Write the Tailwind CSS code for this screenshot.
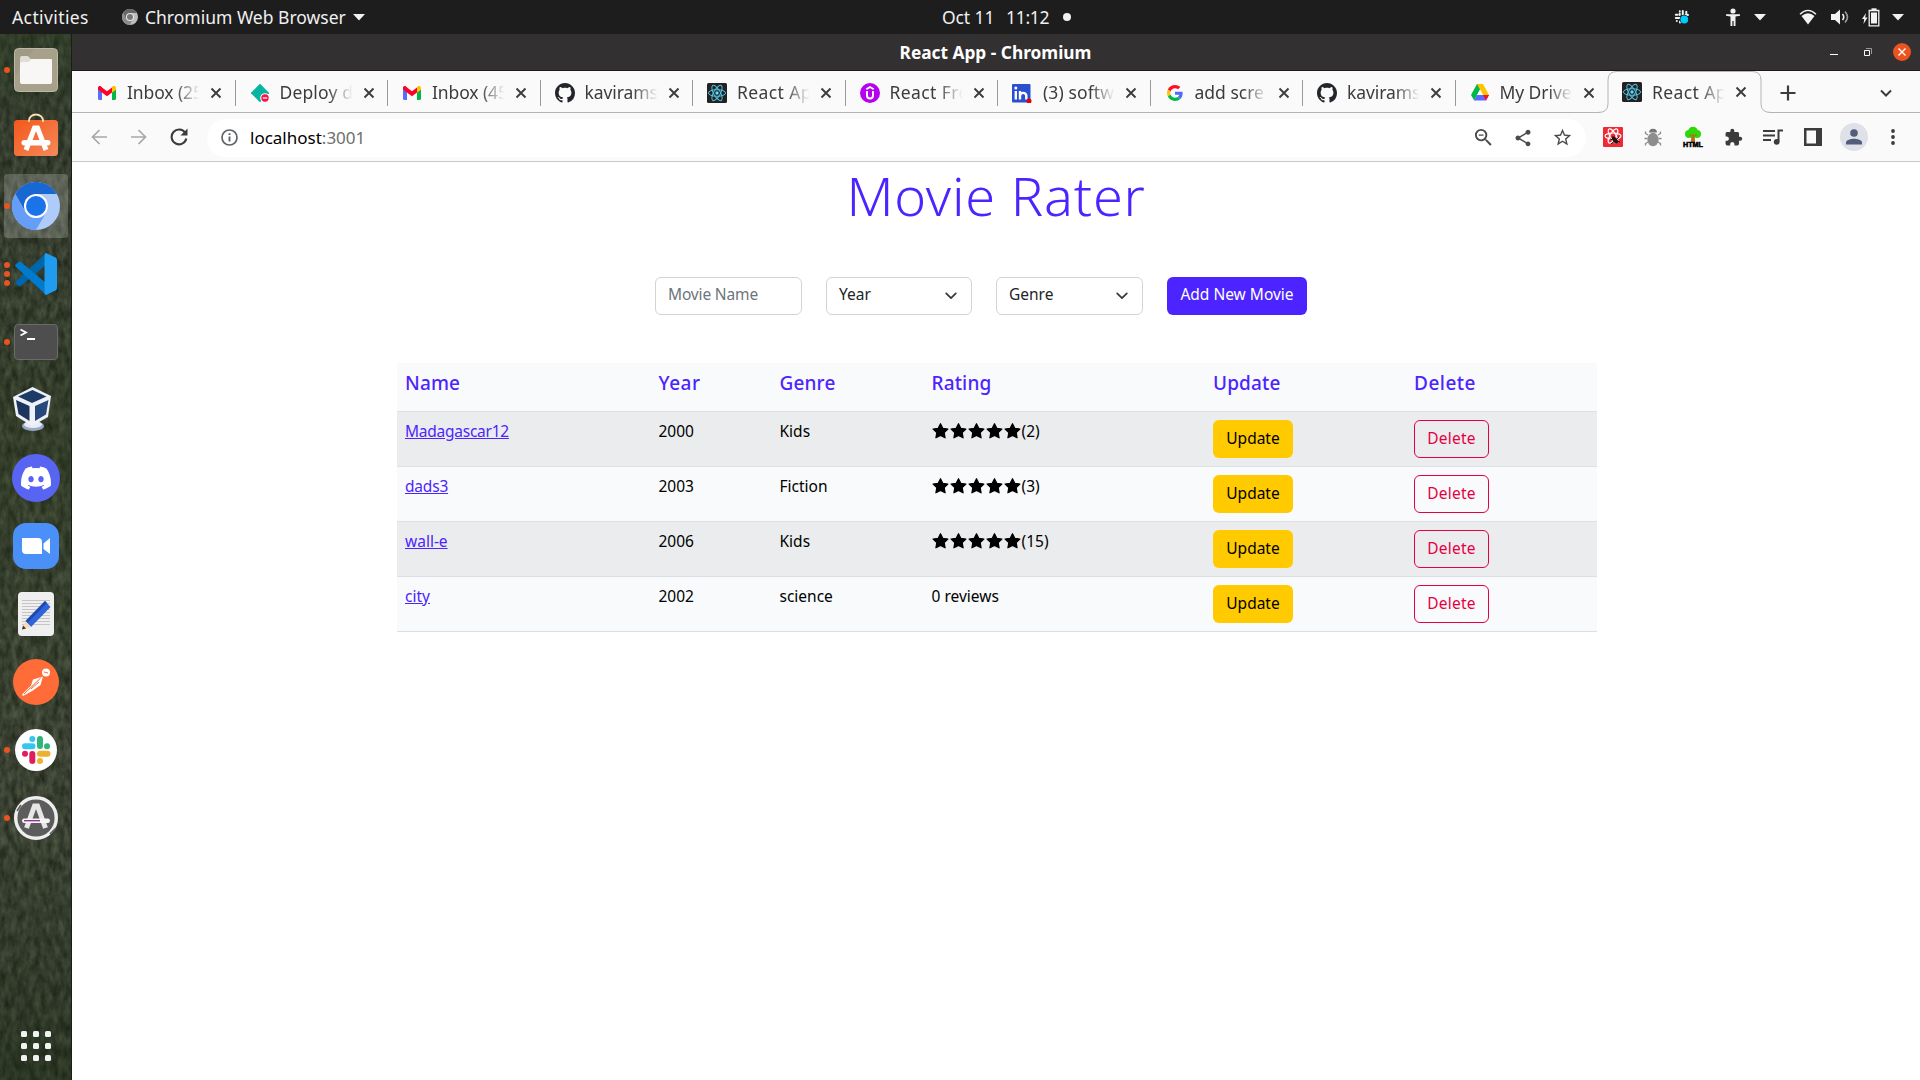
<!DOCTYPE html>
<html lang="en">
<head>
<meta charset="utf-8">
<title>React App</title>
<script src="https://cdn.jsdelivr.net/npm/@tailwindcss/browser@4"></script>
</head>
<body class="flex h-[1080px] w-[1920px] flex-col overflow-hidden bg-white font-['Noto_Sans','Open_Sans',sans-serif]">

<svg class="hidden">
  <symbol id="gmail" viewBox="0 0 18 14"><path fill="#5a6bff" d="M0 3v9.500Q0 14 1.500 14H4V6z"/><path fill="#00b846" d="M14 6v8h2.500Q18 14 18 12.500V3z"/><path fill="#e00020" d="M0 3.500V2Q0 0 2 0L4 1.500V6.500z"/><path fill="#ffc400" d="M18 3.500V2Q18 0 16 0L14 1.500V6.500z"/><path fill="#ff0026" d="M2 0 9 5.300 16 0 14 6.500 9 10.300 4 6.500 0 2Q.5.300 2 0z"/><path fill="#ffc400" d="M14 1.500Q16-.5 17.300.7 18 1.300 18 3.500L14 6.500z"/></symbol>
  <symbol id="github" viewBox="0 0 16 16"><path fill="#22252c" d="M8 0C3.580 0 0 3.580 0 8c0 3.540 2.290 6.530 5.470 7.590.4.070.55-.17.55-.38 0-.19-.01-.82-.01-1.490-2.010.37-2.530-.49-2.690-.94-.09-.23-.48-.94-.82-1.130-.28-.15-.68-.52-.01-.53.63-.01 1.080.58 1.230.82.72 1.210 1.870.87 2.330.66.070-.52.28-.87.51-1.070-1.780-.2-3.640-.89-3.640-3.950 0-.87.31-1.590.82-2.150-.08-.2-.36-1.020.08-2.120 0 0 .67-.21 2.200.82.64-.18 1.320-.27 2-.27.68 0 1.360.09 2 .27 1.530-1.040 2.200-.82 2.200-.82.44 1.100.16 1.920.08 2.120.51.56.82 1.270.82 2.150 0 3.070-1.870 3.750-3.650 3.950.29.25.54.73.54 1.480 0 1.070-.01 1.930-.01 2.200 0 .21.15.46.55.38A8.013 8.013 0 0016 8c0-4.420-3.580-8-8-8z"/></symbol>
  <symbol id="react" viewBox="0 0 20 20"><rect width="20" height="20" rx="1.500" fill="#222"/><g fill="none" stroke="#53c1de" stroke-width="1"><ellipse cx="10" cy="10" rx="8.600" ry="3.300"/><ellipse cx="10" cy="10" rx="8.600" ry="3.300" transform="rotate(60 10 10)"/><ellipse cx="10" cy="10" rx="8.600" ry="3.300" transform="rotate(120 10 10)"/></g><circle cx="10" cy="10" r="1.700" fill="#61dafb"/></symbol>
  <symbol id="close" viewBox="0 0 12 12"><path d="M1.500 1.500 10.500 10.500M10.500 1.500 1.500 10.500" stroke="#3c3c3c" stroke-width="1.900"/></symbol>
  <symbol id="caret" viewBox="0 0 12 7"><path d="M0 0h12L6 6.500z" fill="#f2f2f2"/></symbol>
  <symbol id="star" viewBox="0 0 18 18"><path stroke="#000" stroke-width="1.200" stroke-linejoin="round" d="M8.500 1.700 10.800 6.300 15.900 7 12.200 10.600 13.100 15.800 8.500 13.400 3.900 15.800 4.800 10.600 1.100 7 6.200 6.300z"/></symbol>
  <symbol id="chev" viewBox="0 0 16 16"><path d="m2.500 5 5.500 5.500L13.500 5" fill="none" stroke="#343a40" stroke-width="2" stroke-linecap="round" stroke-linejoin="round"/></symbol>
</svg>

<!-- GNOME top bar -->
<header class="relative flex h-[34px] shrink-0 items-center bg-[#1d1d1d] text-[17.500px] text-[#f0f0f0]">
  <span class="ml-3 w-[110px] whitespace-nowrap tracking-[0.4px]">Activities</span>
  <svg class="h-4 w-4 shrink-0" viewBox="0 0 16 16"><circle cx="8" cy="8" r="8" fill="#bdbdbd"/><path d="M1.100 4A8 8 0 0 1 14.900 4H8L4 10z" fill="#666"/><path d="M1.100 4A8 8 0 0 0 7.800 16L11 10 4.500 10z" fill="#8c8c8c"/><circle cx="8" cy="8" r="4" fill="#e8e8e8"/><circle cx="8" cy="8" r="3" fill="#777"/></svg>
  <span class="ml-[7px] w-[202px] whitespace-nowrap">Chromium Web Browser</span>
  <svg class="ml-[6px] h-[7px] w-3"><use href="#caret"/></svg>
  <div class="absolute left-[942px] top-0 flex h-[34px] items-center whitespace-nowrap"><span class="w-16 tracking-[-0.1px]">Oct 11</span><span class="w-[57px] tracking-[-0.300px]">11:12</span><span class="h-2 w-2 rounded-full bg-[#f2f2f2]"></span></div>
  <div class="ml-auto flex items-center pr-4">
    <svg class="mr-[36px] h-4 w-4" viewBox="0 0 16 16"><g stroke="#f2f2f2" stroke-width="2" stroke-linecap="round"><path d="M5.700 4.500V6M1.800 5.800H3.500M5.800 2.300h.01M8.800 2v4M1.800 9H6M6 12.500v1M2.800 12h.01M12.300 2.800v3M11.500 6h2.500"/></g><circle cx="10.300" cy="10.500" r="4.700" fill="#1d1d1d"/><circle cx="10.300" cy="10.500" r="3.900" fill="#00c8f8"/></svg>
    <svg class="mr-[14px] h-[18px] w-[14px]" viewBox="0 0 14 18"><g fill="#f2f2f2"><circle cx="7" cy="3" r="2.600"/><path d="M0 6.200h14v1.500L9.500 8.500V18H7.600v-5H6.400v5H4.500V8.500L0 7.700z"/></g></svg>
    <svg class="mr-[33px] h-[7px] w-3"><use href="#caret"/></svg>
    <svg class="mr-[14px] h-4 w-[18px]" viewBox="0 0 18 16"><path fill="none" stroke="#f2f2f2" stroke-width="1.300" d="M1 5.200Q9-2.500 17 5.200"/><path fill="#f2f2f2" d="M2.500 7Q9 1.500 15.500 7L9 15.500z"/></svg>
    <svg class="mr-[12px] h-4 w-[19px]" viewBox="0 0 19 16"><path fill="#f2f2f2" d="M0 5h4l5-4.500v15L4 11H0z"/><g fill="none" stroke="#f2f2f2" stroke-width="1.600"><path d="M11.500 5q2.500 3 0 6"/><path stroke="#999" d="M14 2.500q5 5.500 0 11"/></g></svg>
    <svg class="mr-3 h-[19px] w-[18px]" viewBox="0 0 18 19"><path fill="#f2f2f2" d="M4 5 0 11h2.200L1.500 16 5.500 9.500H3.200zM9 4.500h6v11H9z"/><path fill="none" stroke="#f2f2f2" stroke-width="1.300" d="M7.200 2.500h9.600v15.300H7.200z"/><path fill="#f2f2f2" d="M9.500.3h5v2h-5z"/></svg>
    <svg class="h-[7px] w-3"><use href="#caret"/></svg>
  </div>
</header>

<div class="flex min-h-0 flex-1">
  <!-- Dock -->
  <nav class="relative w-[72px] shrink-0 border-r border-[#1b1e18] bg-[#373e30]">
    <svg class="absolute inset-0 h-full w-full" preserveAspectRatio="none"><defs>
      <filter id="grass" x="0" y="0" width="100%" height="100%" color-interpolation-filters="sRGB"><feTurbulence type="fractalNoise" baseFrequency="0.17 0.08" numOctaves="4" seed="7"/><feColorMatrix values="0.34 0 0 0 0.045  0.34 0 0 0 0.075  0.3 0 0 0 0.035  0 0 0 0 1"/></filter>
      <linearGradient id="shade" x2="0" y2="1"><stop offset="0" stop-color="#26381f" stop-opacity=".5"/><stop offset=".15" stop-color="#33382e" stop-opacity=".2"/><stop offset=".42" stop-color="#2c3b1e" stop-opacity=".4"/><stop offset=".7" stop-color="#444a3c" stop-opacity=".2"/><stop offset="1" stop-color="#1c2a16" stop-opacity=".5"/></linearGradient></defs>
      <rect width="72" height="1046" filter="url(#grass)"/><rect width="72" height="1046" fill="url(#shade)"/></svg>
    <div class="relative flex h-full flex-col pt-0.5">
      <div class="relative h-[68px]"><i class="absolute left-1 top-[31px] h-1.5 w-1.5 rounded-full bg-[#e95420]"></i>
        <svg class="absolute left-[14px] top-3 h-11 w-11" viewBox="0 0 44 44"><rect x=".5" y=".5" width="43" height="43" rx="4" fill="#a09983" stroke="#bdb7a6"/><path d="M20 1h20q3 0 3 3v36q0 3-3 3H4q-3 0-3-3V28z" fill="#aca591" opacity=".6"/><path d="M6 10q0-2 2-2h6l2.500 3H38v8H6z" fill="#e0ddd5"/><path d="M6 16q0-2 2-2h7l2-3h19q2 0 2 2v21q0 2-2 2H8q-2 0-2-2z" fill="#f8f7f6"/></svg></div>
      <div class="relative h-[68px]"><svg class="absolute left-[14px] top-[8px] h-[44px] w-11" viewBox="0 0 44 44"><defs><linearGradient id="sw" x2="1" y2="1"><stop stop-color="#f4571c"/><stop offset="1" stop-color="#f48a5a"/></linearGradient></defs><rect y="8" width="44" height="36" rx="3.500" fill="url(#sw)"/><path d="M15 10V8.500a7 6 0 0 1 14 0V10" fill="none" stroke="#f6dfb0" stroke-width="1.800"/><path d="M12 38 20.500 16h3L32 38" fill="none" stroke="#fff" stroke-width="5"/><rect x="7.500" y="28" width="29" height="5.500" rx="2.700" fill="#fff"/></svg></div>
      <div class="relative h-[68px]"><div class="absolute left-1 top-0.5 h-16 w-16 rounded bg-white/20"></div><i class="absolute left-1 top-[31px] h-1.5 w-1.5 rounded-full bg-[#e95420]"></i>
        <svg class="absolute left-3 top-2.5 h-12 w-12" viewBox="0 0 48 48"><circle cx="24" cy="24" r="24" fill="#aecbfa"/><path d="M3.200 12A24 24 0 0 1 44.800 12H24L13.600 30z" fill="#1967d2"/><path d="M3.200 12A24 24 0 0 0 24 48L34.400 30A12 12 0 0 1 13.600 30z" fill="#669df6"/><circle cx="24" cy="24" r="12" fill="#fff"/><circle cx="24" cy="24" r="10" fill="#1a73e8"/></svg></div>
      <div class="relative h-[68px]"><i class="absolute left-1 top-[22px] h-1.5 w-1.5 rounded-full bg-[#e95420]"></i><i class="absolute left-1 top-[31px] h-1.5 w-1.5 rounded-full bg-[#e95420]"></i><i class="absolute left-1 top-10 h-1.5 w-1.5 rounded-full bg-[#e95420]"></i>
        <svg class="absolute left-[15px] top-[13px] h-[42px] w-[42px]" viewBox="0 0 42 42"><path d="M1 28q-1.500 1.500 0 3l2.500 2q1.200.8 2.500 0L31 12V0L1 28z" fill="#0065a9"/><path d="M1 14q-1.500-1.500 0-3l2.500-2q1.200-.8 2.500 0L31 30v12z" fill="#007acc"/><path d="M31 0l9.500 4.500Q42 5.300 42 7v28q0 1.700-1.500 2.500L31 42q-1.500-.5-1.500-2V2q0-1.500 1.500-2z" fill="#1f9cf0"/></svg></div>
      <div class="relative h-[68px]"><i class="absolute left-1 top-[31px] h-1.5 w-1.5 rounded-full bg-[#e95420]"></i>
        <svg class="absolute left-[14px] top-4 h-9 w-11" viewBox="0 0 44 36"><rect x=".5" y=".5" width="43" height="35" rx="3.500" fill="#4e4e4e" stroke="#6b6b6b"/><path d="m6.500 5.500 5.500 3-5.500 3M13 15h8" stroke="#fff" fill="none" stroke-width="1.800"/></svg></div>
      <div class="relative h-[68px]"><svg class="absolute left-[12px] top-[10px] h-[46px] w-[42px]" viewBox="0 0 42 46"><ellipse cx="21" cy="40" rx="11" ry="5" fill="#9aa9c4"/><ellipse cx="21" cy="38.500" rx="9" ry="3.500" fill="#e8edf5"/><path d="M20.500 1 39 10 36 31 20 40 4 30 1 11z" fill="#eef2f8"/><path d="M20.500 4 34.500 10.500 20 17 6 10.500z" fill="#1e3a66"/><path d="M4 14 17.500 20v15L6.500 28z" fill="#1b355f"/><path d="M36.500 14 23 20v15L34 28.500z" fill="#26487a"/></svg></div>
      <div class="relative h-[68px]"><div class="absolute left-3 top-2.5 flex h-12 w-12 items-center justify-center rounded-full bg-[#5865f2]"><svg class="h-[30px] w-[30px]" viewBox="0 0 24 24"><path fill="#fff" d="M20.317 4.3698a19.7913 19.7913 0 00-4.8851-1.5152.0741.0741 0 00-.0785.0371c-.211.3753-.4447.8648-.6083 1.2495-1.8447-.2762-3.68-.2762-5.4868 0-.1636-.3933-.4058-.8742-.6177-1.2495a.077.077 0 00-.0785-.037 19.7363 19.7363 0 00-4.8852 1.515.0699.0699 0 00-.0321.0277C.5334 9.0458-.319 13.5799.0992 18.0578a.0824.0824 0 00.0312.0561c2.0528 1.5076 4.0413 2.4228 5.9929 3.0294a.0777.0777 0 00.0842-.0276c.4616-.6304.8731-1.2952 1.226-1.9942a.076.076 0 00-.0416-.1057c-.6528-.2476-1.2743-.5495-1.8722-.8923a.077.077 0 01-.0076-.1277c.1258-.0943.2517-.1923.3718-.2914a.0743.0743 0 01.0776-.0105c3.9278 1.7933 8.18 1.7933 12.0614 0a.0739.0739 0 01.0785.0095c.1202.099.246.1981.3728.2924a.077.077 0 01-.0066.1276 12.2986 12.2986 0 01-1.873.8914.0766.0766 0 00-.0407.1067c.3604.698.7719 1.3628 1.225 1.9932a.076.076 0 00.0842.0286c1.961-.6067 3.9495-1.5219 6.0023-3.0294a.077.077 0 00.0313-.0552c.5004-5.177-.8382-9.6739-3.5485-13.6604a.061.061 0 00-.0312-.0286zM8.02 15.3312c-1.1825 0-2.1569-1.0857-2.1569-2.419 0-1.3332.9555-2.4189 2.157-2.4189 1.2108 0 2.1757 1.0952 2.1568 2.419 0 1.3332-.9555 2.4189-2.1569 2.4189zm7.9748 0c-1.1825 0-2.1569-1.0857-2.1569-2.419 0-1.3332.9554-2.4189 2.1569-2.4189 1.2108 0 2.1757 1.0952 2.1568 2.419 0 1.3332-.946 2.4189-2.1568 2.4189Z"/></svg></div></div>
      <div class="relative h-[68px]"><svg class="absolute left-[13px] top-[11px] h-[46px] w-[46px]" viewBox="0 0 46 46"><rect width="46" height="46" rx="13" fill="#4a90f8"/><path d="M9 15h16q4 0 4 4v12H13q-4 0-4-4zM30.500 20.500 37 15v16l-6.500-5z" fill="#fff"/></svg></div>
      <div class="relative h-[68px]"><svg class="absolute left-[18px] top-3 h-11 w-9" viewBox="0 0 36 44"><rect width="36" height="44" rx="4" fill="#efefef"/><path d="M4 8.500h28M4 11.500h28M4 14.500h28M4 17.500h28M4 20.500h28M4 23.500h28M4 26.500h28M4 29.500h28M4 32.500h28" stroke="#c4c4c4"/><path d="M27 9 32.500 15 13 35 7.500 29z" fill="#2f65d8"/><path d="M27 9 29 11 9.500 31 7.500 29z" fill="#1e49b0"/><path d="M7.500 29 13 35 4 37.500z" fill="#f8d9b8"/><path d="M5 33.500 8 36.500 4 37.500z" fill="#333"/></svg></div>
      <div class="relative h-[68px]"><svg class="absolute left-[13px] top-[11px] h-[46px] w-[46px]" viewBox="0 0 46 46"><circle cx="23" cy="23" r="23" fill="#ff6c37"/><circle cx="33" cy="13.500" r="4" fill="#fff"/><path d="M30 17.500 27.500 26 20 31.500 10 37l-1-1.500L18 26.500l2-6z" fill="#fff"/><path d="m11 35 9-8.500 8-8M18 30l8-7M31 13l4 1" stroke="#ff6c37" stroke-width="1"/></svg></div>
      <div class="relative h-[68px]"><i class="absolute left-1 top-[31px] h-1.5 w-1.5 rounded-full bg-[#e95420]"></i>
        <svg class="absolute left-[15px] top-[13px] h-[42px] w-[42px]" viewBox="0 0 42 42"><circle cx="21" cy="21" r="21" fill="#fff"/><g stroke-width="6" stroke-linecap="round"><path stroke="#36c5f0" d="M10 17.200h7.500M17.300 10h.01"/><path stroke="#2eb67d" d="M25 10v7M32 17.200h.01"/><path stroke="#ecb22e" d="M25 24.700h7.500M25 32h.01"/><path stroke="#e01e5a" d="M17.300 25v7M10 24.700h.01"/></g></svg></div>
      <div class="relative h-[68px]"><i class="absolute left-1 top-[31px] h-1.5 w-1.5 rounded-full bg-[#e95420]"></i>
        <svg class="absolute left-[14px] top-3 h-11 w-11" viewBox="0 0 44 44"><circle cx="22" cy="22" r="22" fill="#5c5c5c"/><circle cx="22" cy="22" r="20.300" fill="none" stroke="#eee" stroke-width="3.400"/><path d="m3 15 4-6M36 38l6-6" stroke="#5c5c5c" stroke-width="1.600"/><path d="M12.500 32 20.500 10h3L31.500 32" fill="none" stroke="#e6e6e6" stroke-width="5"/><rect x="8" y="22.500" width="28" height="4.500" rx="2.200" fill="#f4f4f4"/><path d="M10 24.700h16" stroke="#92278f" stroke-width="1.300"/></svg></div>
      <svg class="mb-[19px] ml-[21px] mt-auto h-[30px] w-[30px]" viewBox="0 0 30 30" fill="#f2f2f2"><rect width="6" height="6" rx="1.500"/><rect x="12" width="6" height="6" rx="1.500"/><rect x="24" width="6" height="6" rx="1.500"/><rect y="12" width="6" height="6" rx="1.500"/><rect x="12" y="12" width="6" height="6" rx="1.500"/><rect x="24" y="12" width="6" height="6" rx="1.500"/><rect y="24" width="6" height="6" rx="1.500"/><rect x="12" y="24" width="6" height="6" rx="1.500"/><rect x="24" y="24" width="6" height="6" rx="1.500"/></svg>
    </div>
  </nav>

  <main class="flex min-w-0 flex-1 flex-col">
    <!-- Window title bar -->
    <div class="relative flex h-[37px] shrink-0 items-center justify-center border-b border-[#1e1a1b] bg-[#333031] pt-0.5 pr-px text-[17.300px] font-bold text-white">
      <span class="whitespace-nowrap">React App - Chromium</span>
      <div class="absolute right-[9px] top-[9px] flex items-center">
        <svg class="h-[18px] w-[84px]" viewBox="0 0 84 18"><path d="M3 11.500h8" stroke="#fff"/><path d="M37.500 7.500h5v5h-5z" fill="none" stroke="#fff"/><path d="M39 5.500h5.500V11" fill="none" stroke="#999"/><circle cx="75" cy="9" r="9" fill="#e95420"/><path d="m71.500 5.500 7 7m0-7-7 7" stroke="#fff" stroke-width="1.400"/></svg>
      </div>
    </div>

    <!-- Tab strip -->
    <div class="flex h-[42px] shrink-0 items-center border-b border-[#b4b4b4] bg-[#fafafa] pl-[11px] text-[17.500px] text-[#3c3c3c]">
      <div class="flex w-[152.500px] shrink-0 items-center pl-[15px] pt-0.5"><svg class="h-[14px] w-[18px] shrink-0"><use href="#gmail"/></svg><span class="ml-[11px] w-[74px] overflow-hidden whitespace-nowrap tracking-[-0.1px] [mask-image:linear-gradient(to_right,black_65%,transparent_98%)]">Inbox (25</span><svg class="ml-[9px] h-3 w-3 shrink-0"><use href="#close"/></svg><i class="ml-auto h-[26px] w-px bg-[#999]"></i></div>
      <div class="flex w-[152.500px] shrink-0 items-center pl-[15px] pt-0.5"><svg class="h-[18px] w-[18px] shrink-0" viewBox="0 0 18 18"><path d="M9-.3 18.300 9 9 18.300-.3 9z" fill="#05b5a1"/><circle cx="14" cy="14" r="4.800" fill="#fafafa"/><circle cx="14" cy="14" r="3.700" fill="#ff0f46"/><path d="M11.800 14h4.400" stroke="#fff" stroke-width="1.300"/></svg><span class="ml-[11px] w-[74px] overflow-hidden whitespace-nowrap tracking-[0.15px] [mask-image:linear-gradient(to_right,black_65%,transparent_98%)]">Deploy d</span><svg class="ml-[9px] h-3 w-3 shrink-0"><use href="#close"/></svg><i class="ml-auto h-[26px] w-px bg-[#999]"></i></div>
      <div class="flex w-[152.500px] shrink-0 items-center pl-[15px] pt-0.5"><svg class="h-[14px] w-[18px] shrink-0"><use href="#gmail"/></svg><span class="ml-[11px] w-[74px] overflow-hidden whitespace-nowrap tracking-[-0.1px] [mask-image:linear-gradient(to_right,black_65%,transparent_98%)]">Inbox (45</span><svg class="ml-[9px] h-3 w-3 shrink-0"><use href="#close"/></svg><i class="ml-auto h-[26px] w-px bg-[#999]"></i></div>
      <div class="flex w-[152.500px] shrink-0 items-center pl-[14px] pt-0.5"><svg class="h-5 w-5 shrink-0"><use href="#github"/></svg><span class="ml-[10px] w-[74px] overflow-hidden whitespace-nowrap tracking-[-0.1px] [mask-image:linear-gradient(to_right,black_65%,transparent_98%)]">kavirams</span><svg class="ml-[9px] h-3 w-3 shrink-0"><use href="#close"/></svg><i class="ml-auto h-[26px] w-px bg-[#999]"></i></div>
      <div class="flex w-[152.500px] shrink-0 items-center pl-[14px] pt-0.5"><svg class="h-5 w-5 shrink-0"><use href="#react"/></svg><span class="ml-[10px] w-[74px] overflow-hidden whitespace-nowrap tracking-[0.4px] [mask-image:linear-gradient(to_right,black_65%,transparent_98%)]">React App</span><svg class="ml-[9px] h-3 w-3 shrink-0"><use href="#close"/></svg><i class="ml-auto h-[26px] w-px bg-[#999]"></i></div>
      <div class="flex w-[152.500px] shrink-0 items-center pl-[14px] pt-0.5"><svg class="h-5 w-5 shrink-0" viewBox="0 0 20 20"><circle cx="10" cy="10" r="10" fill="#b800f0"/><path d="M6.300 6.200 10 4l3.700 2.200M7 8v4.500a3 3 0 0 0 6 0V8" stroke="#fff" stroke-width="1.900" fill="none"/></svg><span class="ml-[10px] w-[74px] overflow-hidden whitespace-nowrap tracking-[0.4px] [mask-image:linear-gradient(to_right,black_65%,transparent_98%)]">React Fro</span><svg class="ml-[9px] h-3 w-3 shrink-0"><use href="#close"/></svg><i class="ml-auto h-[26px] w-px bg-[#999]"></i></div>
      <div class="flex w-[152.500px] shrink-0 items-center pl-[14px] pt-0.5"><svg class="h-5 w-5 shrink-0" viewBox="0 0 20 20"><rect y="1" width="18.500" height="18.500" rx="1" fill="#2c4fd0"/><path d="M3.800 8v8.500M8 8v8.500M8 12.500a3.200 3.200 0 0 1 6.300 0v4" stroke="#fff" stroke-width="2.400" fill="none"/><circle cx="3.800" cy="5" r="1.500" fill="#fff"/><circle cx="17" cy="18" r="2.500" fill="#e60000"/></svg><span class="ml-[11px] w-[73px] overflow-hidden whitespace-nowrap tracking-[0.1px] [mask-image:linear-gradient(to_right,black_65%,transparent_98%)]">(3) softw</span><svg class="ml-[9px] h-3 w-3 shrink-0"><use href="#close"/></svg><i class="ml-auto h-[26px] w-px bg-[#999]"></i></div>
      <div class="flex w-[152.500px] shrink-0 items-center pl-[16px] pt-0.5"><svg class="h-4 w-4 shrink-0" viewBox="0 0 48 48"><path fill="#ff0f26" d="M24 9.500c3.540 0 6.710 1.220 9.210 3.600l6.850-6.850C35.900 2.380 30.470 0 24 0 14.620 0 6.510 5.380 2.560 13.220l7.980 6.190C12.430 13.720 17.740 9.500 24 9.500z"/><path fill="#4f6bff" d="M46.980 24.550c0-1.570-.15-3.090-.38-4.550H24v9.020h12.940c-.58 2.960-2.260 5.480-4.780 7.180l7.730 6c4.510-4.180 7.090-10.360 7.090-17.650z"/><path fill="#ffc400" d="M10.530 28.590c-.48-1.450-.76-2.990-.76-4.590s.27-3.140.76-4.590l-7.980-6.190C.92 16.460 0 20.120 0 24c0 3.880.92 7.540 2.560 10.780l7.970-6.190z"/><path fill="#00b846" d="M24 48c6.480 0 11.930-2.130 15.890-5.810l-7.730-6c-2.150 1.450-4.920 2.300-8.160 2.300-6.260 0-11.570-4.220-13.470-9.910l-7.980 6.190C6.510 42.620 14.620 48 24 48z"/></svg><span class="ml-[12px] w-[74px] overflow-hidden whitespace-nowrap [mask-image:linear-gradient(to_right,black_65%,transparent_98%)]">add scre</span><svg class="ml-[9px] h-3 w-3 shrink-0"><use href="#close"/></svg><i class="ml-auto h-[26px] w-px bg-[#999]"></i></div>
      <div class="flex w-[152.500px] shrink-0 items-center pl-[14px] pt-0.5"><svg class="h-5 w-5 shrink-0"><use href="#github"/></svg><span class="ml-[10px] w-[74px] overflow-hidden whitespace-nowrap tracking-[-0.1px] [mask-image:linear-gradient(to_right,black_65%,transparent_98%)]">kavirams</span><svg class="ml-[9px] h-3 w-3 shrink-0"><use href="#close"/></svg><i class="ml-auto h-[26px] w-px bg-[#999]"></i></div>
      <div class="flex w-[152.500px] shrink-0 items-center pl-[15px] pt-0.5"><svg class="h-[17px] w-[18px] shrink-0" viewBox="0 0 18 17"><path fill="#00b846" d="M6 0h6L3.200 16.500 0 11z"/><path fill="#ffc400" d="M6 0h6l6 11h-6z"/><path fill="#5a6bff" d="M6 11h12l-3 5.500H3z"/><path fill="#ff0f26" d="M12 11h6l-3 5.500z"/><path fill="#fafafa" d="m9 5.500 3 5.500H6z"/></svg><span class="ml-[11px] w-[74px] overflow-hidden whitespace-nowrap tracking-[-0.080px] [mask-image:linear-gradient(to_right,black_65%,transparent_98%)]">My Drive</span><svg class="ml-[9px] h-3 w-3 shrink-0"><use href="#close"/></svg></div>
      <div class="relative flex h-[42px] w-[152.500px] shrink-0 items-center pl-[14px] pt-px"><svg class="absolute -left-[10px] top-0 h-[43px] w-[174px]" viewBox="0 0 174 43"><path d="M0 41.500Q10 41.500 10 33V9Q10 .5 19 .5H154Q163 .5 163 9V33Q163 41.500 173 41.500V43H0z" fill="#fafafa"/><path d="M0 41.500Q10 41.500 10 33V9Q10 .5 19 .5H154Q163 .5 163 9V33Q163 41.500 173 41.500" fill="none" stroke="#b4b4b4"/></svg><svg class="relative h-5 w-5 shrink-0"><use href="#react"/></svg><span class="relative ml-[10px] w-[74px] overflow-hidden whitespace-nowrap tracking-[0.4px] [mask-image:linear-gradient(to_right,black_65%,transparent_98%)]">React App</span><svg class="relative ml-[9px] h-3 w-3 shrink-0"><use href="#close"/></svg></div>
      <svg class="ml-[19px] mt-0.5 h-4 w-4" viewBox="0 0 16 16"><path d="M8 .5v15M.5 8h15" stroke="#3c3c3c" stroke-width="2.200"/></svg>
      <svg class="ml-auto mr-[28px] mt-0.5 h-3 w-3" viewBox="0 0 12 12"><path d="m1 3.500 5 5 5-5" fill="none" stroke="#3c3c3c" stroke-width="2"/></svg>
    </div>

    <!-- Toolbar -->
    <div class="flex h-[49px] shrink-0 items-center border-b border-[#c8c8c8] bg-[#fafafa]">
      <svg class="ml-[19px] h-4 w-4" viewBox="0 0 16 16"><path d="M16 8H1.500M8.500 1 1.500 8l7 7" fill="none" stroke="#a8a8a8" stroke-width="1.700"/></svg>
      <svg class="ml-6 h-4 w-4" viewBox="0 0 16 16"><path d="M0 8h14.500M7.500 1l7 7-7 7" fill="none" stroke="#a8a8a8" stroke-width="1.700"/></svg>
      <svg class="ml-[23px] h-[18px] w-[18px]" viewBox="0 0 18 18"><path d="M15.200 4.800A7.400 7.400 0 1 0 16.300 10.500" fill="none" stroke="#3c3c3c" stroke-width="2.100"/><path d="M17.500.5V7.500h-7z" fill="#3c3c3c"/></svg>
      <div class="ml-[19px] mt-px flex h-[38px] w-[1379px] shrink-0 items-center rounded-full bg-white pl-[14px] text-[17px] text-black">
        <svg class="h-[17px] w-[17px]" viewBox="0 0 17 17"><circle cx="8.500" cy="8.500" r="7.500" fill="none" stroke="#5f6368" stroke-width="1.700"/><path d="M8.500 7.500v5M8.500 4.200v1.900" stroke="#5f6368" stroke-width="1.900"/></svg>
        <span class="ml-3 whitespace-nowrap">localhost<span class="text-[#6e6e6e]">:3001</span></span>
        <svg class="ml-auto h-[23px] w-[23px]" viewBox="0 0 24 24"><path fill="#4a4a4a" d="M15.500 14h-.79l-.28-.27A6.471 6.471 0 0016 9.500 6.500 6.500 0 109.500 16c1.610 0 3.090-.59 4.230-1.570l.27.28v.79l5 4.990L20.490 19l-4.990-5zm-6 0C7.010 14 5 11.990 5 9.500S7.010 5 9.500 5 14 7.010 14 9.500 11.990 14 9.500 14zM7 8.800h5v1.500H7z"/></svg>
        <svg class="ml-[18px] h-5 w-5" viewBox="0 0 24 24"><path fill="#4a4a4a" d="M18 16.080c-.76 0-1.440.3-1.960.77L8.910 12.700c.05-.23.09-.46.09-.7s-.04-.47-.09-.7l7.050-4.110c.54.5 1.250.81 2.040.81 1.660 0 3-1.340 3-3s-1.340-3-3-3-3 1.340-3 3c0 .24.04.47.09.7L8.040 9.810C7.500 9.310 6.790 9 6 9c-1.660 0-3 1.340-3 3s1.340 3 3 3c.79 0 1.500-.31 2.040-.81l7.120 4.160c-.05.21-.08.43-.08.65 0 1.610 1.310 2.920 2.920 2.920s2.920-1.310 2.920-2.920-1.310-2.920-2.920-2.920z"/></svg>
        <svg class="ml-[19px] mr-[13px] h-[21px] w-[21px]" viewBox="0 0 24 24"><path fill="#4a4a4a" d="M22 9.240l-7.190-.62L12 2 9.190 8.630 2 9.240l5.460 4.730L5.820 21 12 17.270 18.180 21l-1.630-7.030L22 9.240zM12 15.400l-3.760 2.270 1-4.280-3.320-2.880 4.380-.38L12 6.100l1.710 4.040 4.380.38-3.320 2.880 1 4.280L12 15.400z"/></svg>
      </div>
      <svg class="ml-[17px] h-5 w-5" viewBox="0 0 20 20"><rect width="20" height="20" rx="1" fill="#ee2b34"/><g fill="none" stroke="#fff" stroke-width="1.100"><ellipse cx="10" cy="9" rx="8" ry="3"/><ellipse cx="10" cy="9" rx="8" ry="3" transform="rotate(60 10 9)"/><ellipse cx="10" cy="9" rx="8" ry="3" transform="rotate(120 10 9)"/></g><ellipse cx="12" cy="13" rx="2.200" ry="4.200" fill="#2a1010" transform="rotate(-35 12 13)"/><path d="M7 12l10 3M8 17l8-7" stroke="#2a1010"/></svg>
      <svg class="ml-[20px] h-5 w-5" viewBox="0 0 20 20"><g fill="none" stroke="#8a8a8a" stroke-width="1.300"><path d="M5 8 2.500 6.500V4.500M15 8l2.500-1.500V4.500M4.500 11.500H1.500M15.500 11.500h3M5 15l-2.500 1.500v2M15 15l2.500 1.500v2"/></g><ellipse cx="10" cy="12.500" rx="5.600" ry="6.800" fill="#8e8e8e"/><path d="M6 5.500a4 3.800 0 0 1 8 0z" fill="#777"/></svg>
      <svg class="ml-5 h-5 w-5 overflow-visible" viewBox="0 0 20 20"><path d="M8.500 8h3l.8 8H7.700z" fill="#b3701c"/><g fill="#2fd80a"><circle cx="6" cy="7" r="4"/><circle cx="14" cy="7" r="4"/><circle cx="10" cy="4.500" r="4.800"/></g><path d="m10 13V7M10 10 6.500 7.500M10 10l3.500-2.500" stroke="#b3701c" stroke-width="1.500"/><text x="10" y="19.500" text-anchor="middle" textLength="20" font-size="6.500" font-weight="900" stroke="#000" stroke-width=".5" font-family="Liberation Sans, sans-serif" lengthAdjust="spacingAndGlyphs">HTML</text></svg>
      <svg class="ml-[21px] h-[19px] w-[19px]" viewBox="0 0 24 24"><path fill="#3c3c3c" d="M20.500 11H19V7c0-1.100-.9-2-2-2h-4V3.500C13 2.120 11.880 1 10.500 1S8 2.120 8 3.500V5H4c-1.100 0-1.990.9-1.990 2v3.800H3.500c1.490 0 2.700 1.210 2.700 2.700s-1.210 2.700-2.700 2.700H2V20c0 1.100.9 2 2 2h3.800v-1.500c0-1.490 1.210-2.700 2.700-2.700 1.490 0 2.700 1.210 2.700 2.700V22H17c1.100 0 2-.9 2-2v-4h1.500c1.380 0 2.500-1.120 2.500-2.500S21.880 11 20.500 11z"/></svg>
      <svg class="ml-[20px] h-4 w-5" viewBox="0 0 20 16"><path d="M0 2h12M0 6.500h12M0 11h8" stroke="#3c3c3c" stroke-width="2"/><path d="M15.500 12.500V1.500H20" fill="none" stroke="#3c3c3c" stroke-width="2"/><circle cx="13.700" cy="12.800" r="2.900" fill="#3c3c3c"/></svg>
      <svg class="ml-[21px] h-[18px] w-[18px]" viewBox="0 0 18 18"><path d="M0 0h18v18H0zM2.500 2.500v13H12v-13z" fill="#3c3c3c" fill-rule="evenodd"/></svg>
      <span class="ml-[18px] flex h-7 w-7 items-center justify-center rounded-full bg-[#dfe1e8]"><svg class="h-4 w-4" viewBox="0 0 16 16" fill="#525c7c"><circle cx="8" cy="4" r="3.800"/><path d="M0 15.500v-2C0 10.800 5 9.700 8 9.700s8 1.100 8 3.800v2z"/></svg></span>
      <svg class="ml-[23px] h-4 w-1" viewBox="0 0 4 16" fill="#3c3c3c"><circle cx="2" cy="2" r="1.900"/><circle cx="2" cy="8" r="1.900"/><circle cx="2" cy="14" r="1.900"/></svg>
    </div>

    <!-- Page -->
    <div class="flex flex-1 flex-col bg-white text-[15.500px] text-black">
      <h1 class="h-[67px] text-center text-[54px] font-light leading-[66px] tracking-[0.8px] text-[#4c24ff]">Movie Rater</h1>
      <div class="mt-12 flex h-[38px] pl-[583px] leading-none">
        <div class="flex w-[147px] items-center rounded-md border border-[#ced4da] pb-0.5 pl-3 tracking-[-0.15px] text-[#6c757d]">Movie Name</div>
        <div class="ml-6 flex w-[146px] items-center justify-between rounded-md border border-[#ced4da] pl-3 pr-[13px] text-[#212529]"><span class="pb-0.5">Year</span><svg class="h-3.5 w-3.5"><use href="#chev"/></svg></div>
        <div class="ml-6 flex w-[147px] items-center justify-between rounded-md border border-[#ced4da] pl-3 pr-[13px] text-[#212529]"><span class="pb-0.5">Genre</span><svg class="h-3.5 w-3.5"><use href="#chev"/></svg></div>
        <div class="ml-6 flex w-[140px] items-center justify-center whitespace-nowrap rounded-md bg-[#4c24ff] pb-0.5 text-white">Add New Movie</div>
      </div>
      <table class="ml-[325px] mt-12 w-[1200px] table-fixed border-separate border-spacing-0 bg-[#f8fafc] text-left align-top">
        <colgroup><col class="w-[253.500px]"><col class="w-[121px]"><col class="w-[152px]"><col class="w-[281.500px]"><col class="w-[201px]"><col class="w-[191px]"></colgroup>
        <thead><tr class="h-[49px] text-[19px] leading-6 tracking-[0.15px] text-[#4c24ff] *:border-b *:border-[#dcdfe3] *:px-2 *:pt-2 *:align-top *:font-medium">
          <th>Name</th><th class="tracking-[0.5px]">Year</th><th>Genre</th><th>Rating</th><th>Update</th><th class="tracking-[0.5px]">Delete</th></tr></thead>
        <tbody class="leading-[22px]">
          <tr class="h-[55px] bg-[#ebecee] *:border-b *:border-[#dcdfe3] *:px-2 *:pt-2 *:align-top"><td><a class="tracking-[-0.25px] text-[#4c24ff] underline">Madagascar12</a></td><td>2000</td><td>Kids</td><td><div class="flex items-center"><svg class="h-[18px] w-[18px]"><use href="#star"/></svg><svg class="h-[18px] w-[18px]"><use href="#star"/></svg><svg class="h-[18px] w-[18px]"><use href="#star"/></svg><svg class="h-[18px] w-[18px]"><use href="#star"/></svg><svg class="h-[18px] w-[18px]"><use href="#star"/></svg><span>(2)</span></div></td><td><button class="h-[38px] w-20 rounded-md bg-[#ffca00] pb-0.5">Update</button></td><td><button class="h-[38px] w-[75px] rounded-md border border-[#e60042] pb-0.5 tracking-[0.2px] text-[#e60042]">Delete</button></td></tr>
          <tr class="h-[55px] *:border-b *:border-[#dcdfe3] *:px-2 *:pt-2 *:align-top"><td><a class="tracking-[-0.2px] text-[#4c24ff] underline">dads3</a></td><td>2003</td><td>Fiction</td><td><div class="flex items-center"><svg class="h-[18px] w-[18px]"><use href="#star"/></svg><svg class="h-[18px] w-[18px]"><use href="#star"/></svg><svg class="h-[18px] w-[18px]"><use href="#star"/></svg><svg class="h-[18px] w-[18px]"><use href="#star"/></svg><svg class="h-[18px] w-[18px]"><use href="#star"/></svg><span>(3)</span></div></td><td><button class="h-[38px] w-20 rounded-md bg-[#ffca00] pb-0.5">Update</button></td><td><button class="h-[38px] w-[75px] rounded-md border border-[#e60042] pb-0.5 tracking-[0.2px] text-[#e60042]">Delete</button></td></tr>
          <tr class="h-[55px] bg-[#ebecee] *:border-b *:border-[#dcdfe3] *:px-2 *:pt-2 *:align-top"><td><a class="text-[#4c24ff] underline">wall-e</a></td><td>2006</td><td>Kids</td><td><div class="flex items-center"><svg class="h-[18px] w-[18px]"><use href="#star"/></svg><svg class="h-[18px] w-[18px]"><use href="#star"/></svg><svg class="h-[18px] w-[18px]"><use href="#star"/></svg><svg class="h-[18px] w-[18px]"><use href="#star"/></svg><svg class="h-[18px] w-[18px]"><use href="#star"/></svg><span>(15)</span></div></td><td><button class="h-[38px] w-20 rounded-md bg-[#ffca00] pb-0.5">Update</button></td><td><button class="h-[38px] w-[75px] rounded-md border border-[#e60042] pb-0.5 tracking-[0.2px] text-[#e60042]">Delete</button></td></tr>
          <tr class="h-[55px] *:border-b *:border-[#dcdfe3] *:px-2 *:pt-2 *:align-top"><td><a class="text-[#4c24ff] underline">city</a></td><td>2002</td><td>science</td><td>0 reviews</td><td><button class="h-[38px] w-20 rounded-md bg-[#ffca00] pb-0.5">Update</button></td><td><button class="h-[38px] w-[75px] rounded-md border border-[#e60042] pb-0.5 tracking-[0.2px] text-[#e60042]">Delete</button></td></tr>
        </tbody>
      </table>
    </div>
  </main>
</div>
</body>
</html>
